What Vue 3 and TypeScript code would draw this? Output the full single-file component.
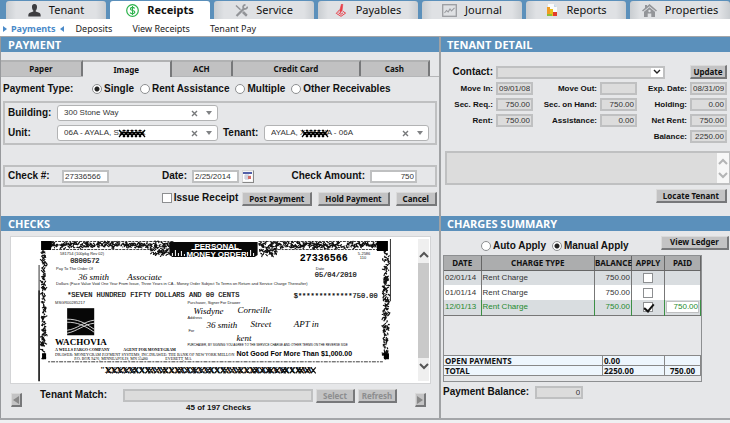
<script setup lang="ts">
import { computed, ref } from 'vue'

interface Charge {
  date: string
  type: string
  balance: string
  apply: boolean
  paid: string
}

const mainTabs = ['Tenant', 'Receipts', 'Service', 'Payables', 'Journal', 'Reports', 'Properties']
const activeTab = ref('Receipts')
const methods = ['Paper', 'Image', 'ACH', 'Credit Card', 'Cash']
const activeMethod = ref('Image')
const paymentTypes = ['Single', 'Rent Assistance', 'Multiple', 'Other Receivables']
const paymentType = ref('Single')
const applyModes = ['Auto Apply', 'Manual Apply']
const applyMode = ref('Manual Apply')

const building = ref('300 Stone Way')
const unit = ref('06A - AYALA, SXXXXX')
const tenant = ref('AYALA, XXXXXA - 06A')
const checkNumber = ref('27336566')
const checkDate = ref('2/25/2014')
const checkAmount = ref('750')
const issueReceipt = ref(false)

const details = [
  { id: 'move-in', label: 'Move In:', value: '09/01/08', text: true },
  { id: 'move-out', label: 'Move Out:', value: '', text: true },
  { id: 'exp', label: 'Exp. Date:', value: '08/31/09', text: true },
  { id: 'sec-req', label: 'Sec. Req.:', value: '750.00' },
  { id: 'sec-hand', label: 'Sec. on Hand:', value: '750.00' },
  { id: 'holding', label: 'Holding:', value: '0.00' },
  { id: 'rent', label: 'Rent:', value: '750.00' },
  { id: 'assistance', label: 'Assistance:', value: '0.00' },
  { id: 'net-rent', label: 'Net Rent:', value: '750.00' },
  { id: 'balance', label: 'Balance:', value: '2250.00', last: true },
]

const charges = ref<Charge[]>([
  { date: '02/01/14', type: 'Rent Charge', balance: '750.00', apply: false, paid: '' },
  { date: '01/01/14', type: 'Rent Charge', balance: '750.00', apply: false, paid: '' },
  { date: '12/01/13', type: 'Rent Charge', balance: '750.00', apply: true, paid: '750.00' },
])

// Repeatable engraved scrollwork for the money order's border.
function scrollwork(x: number, y: number, w: number, h: number, count: number, start: number) {
  let seed = start
  const next = (n: number) => {
    seed = (seed * 1103515245 + 12345) % 2147483648
    return Math.floor((seed / 2147483648) * n)
  }
  let d = ''
  for (let i = 0; i < count; i++) {
    d += `M${x + next(w)} ${y + next(h)}q${next(5) - 2} ${next(5) - 2} ${next(5) - 2} ${next(5) - 2}`
  }
  return d
}
const ornament = computed(() =>
  [
    scrollwork(51, 243, 122, 5, 260, 7),
    scrollwork(150, 249, 19, 7, 50, 19),
    scrollwork(259, 243, 118, 5, 250, 31),
    scrollwork(259, 249, 18, 7, 45, 43),
    scrollwork(42, 251, 4, 109, 150, 57),
    scrollwork(383, 251, 5, 109, 180, 71),
  ].join(''),
)
// Crossing pen strokes that blot out the routing line.
const blots = computed(() => {
  let d = ''
  for (let x = 106; x < 312; x += x % 5 === 0 ? 3 : 6) d += `M${x} 367l5 6M${x + 5} 367l-5 6`
  return d
})
</script>

<template>
  <div class="page">
    <nav class="main-tabs" aria-label="Main">
      <button v-for="t in mainTabs" :key="t" type="button" class="main-tab" :class="{ active: t === activeTab }" @click="activeTab = t">
        <svg v-if="t === 'Tenant'" class="tab-icon" viewBox="0 0 13 13"><path d="M6.500 0C4.500 0 3.800 1.500 4 3.500c.1 1.500.8 2.700 1.300 3.100v.9L1.800 8.700C.6 9.200.3 10 .3 12.500h12.400c0-2.500-.3-3.300-1.500-3.800L7.700 7.500v-.9c.5-.4 1.200-1.600 1.300-3.100.2-2-.5-3.500-2.500-3.500z" fill="#3d3d40" /></svg>
        <svg v-else-if="t === 'Receipts'" class="tab-icon" viewBox="0 0 13 13" fill="none" stroke="#2bb24a"><circle cx="6.500" cy="6.500" r="5.800" stroke-width="1.200" /><path d="M8.600 4.500C8.200 3.700 7.500 3.400 6.500 3.400c-1.300 0-2.100.6-2.100 1.500 0 2.200 4.400 1 4.400 3.200 0 1-1 1.600-2.300 1.600-1.200 0-2-.5-2.400-1.300M6.500 2v9" stroke-width="1.100" /></svg>
        <svg v-else-if="t === 'Service'" class="tab-icon" viewBox="0 0 13 13" fill="none" stroke="#929498"><path d="M1 1.500l4.500 4.300M8 8.200l3.700 3.700" stroke-width="1.500" /><path d="M8 8l3.700 3.700" stroke-width="2.600" /><path d="M1.500 12l7.700-7.600" stroke-width="2.200" /><path d="M12.200 2.600c.3 2.200-2.200 3-3.500 1.700S8.300.9 10.500.8" stroke-width="1.700" /></svg>
        <svg v-else-if="t === 'Payables'" class="tab-icon" viewBox="0 0 13 13" fill="none" stroke="#e83e48"><path d="M6.500 0l1.300.3-.7 6L5.300 9l-.4-3z" fill="#e83e48" stroke-width=".6" /><path d="M4.700 5.700L1.300 9.400 6 12.300l4.600-3.200-3-2M3.500 8.800l2.500 1.500 2-1.500" stroke-width="1" /></svg>
        <svg v-else-if="t === 'Journal'" class="tab-icon wide" viewBox="0 0 15 13" fill="none" stroke="#9b9da1"><rect x=".7" y=".7" width="13.600" height="11.600" stroke-width="1.300" /><path d="M2.500 9l2-2.500 1.700 1.400L8 5l1.500 2L12.500 3.800" stroke-width="1.100" /></svg>
        <svg v-else-if="t === 'Reports'" class="tab-icon" viewBox="0 0 13 13"><path d="M3 0h6l3 3v9H3z" fill="#fafcfd" /><path d="M9 0l3 3H9z" fill="#c5d9e8" /><path d="M2 3h3v9H2z" fill="#f09b20" /><path d="M5 5h3v7H5z" fill="#e7c21d" /><path d="M2 10h5v2H2z" fill="#8cbd36" /><path d="M8 8h4v4H8z" fill="#e33b2b" /></svg>
        <svg v-else class="tab-icon wide" viewBox="0 0 15 13" fill="#939599"><path d="M7.500 0L15 6.500l-1 1L7.500 2.200 1 7.500l-1-1L3 3.900V1h2v1.200z" /><path d="M7.500 3.200L13 7.700V13H9.300V9.500H5.700V13H2V7.700z" /><circle cx="7.500" cy="7" r="1.200" fill="#dfe1e4" /></svg>
        <span>{{ t }}</span>
      </button>
    </nav>

    <nav class="sub-nav" aria-label="Receipts">
      <a href="#" class="current">Payments</a>
      <a href="#">Deposits</a>
      <a href="#">View Receipts</a>
      <a href="#">Tenant Pay</a>
    </nav>

    <main class="board">
      <section class="panel payment">
        <h2>PAYMENT</h2>
        <div class="methods">
          <button v-for="m in methods" :key="m" type="button" class="method" :class="[m.toLowerCase().replace(' ', '-'), { active: m === activeMethod }]" @click="activeMethod = m">{{ m }}</button>
        </div>
        <div class="types" role="radiogroup" aria-labelledby="type-label">
          <span id="type-label" class="types-label">Payment Type:</span>
          <label v-for="p in paymentTypes" :key="p" class="choice"><input v-model="paymentType" type="radio" name="type" :value="p" />{{ p }}</label>
        </div>

        <div class="box lease">
          <label for="building">Building:</label>
          <div class="combo">
            <select id="building" v-model="building"><option>300 Stone Way</option></select>
            <button type="button" class="clear" aria-label="Clear building"><svg viewBox="0 0 7 7"><path d="M1 1l5 5M6 1L1 6" /></svg></button>
            <svg class="caret" viewBox="0 0 6 4"><path d="M0 0h6L3 4z" /></svg>
          </div>
          <label for="unit" class="row-two">Unit:</label>
          <div class="combo row-two">
            <select id="unit" v-model="unit"><option>06A - AYALA, SXXXXX</option></select>
            <svg class="redaction unit-mark" viewBox="0 0 28 9"><path d="M1 1l6 7M7 1L1 8M5 1l6 7M11 1L5 8M9 1l6 7M15 1L9 8M13 1l6 7M19 1l-6 7M17 1l6 7M23 1l-6 7M21 1l6 7M27 1l-6 7M2 5h24" /></svg>
            <button type="button" class="clear" aria-label="Clear unit"><svg viewBox="0 0 7 7"><path d="M1 1l5 5M6 1L1 6" /></svg></button>
            <svg class="caret" viewBox="0 0 6 4"><path d="M0 0h6L3 4z" /></svg>
          </div>
          <label for="tenant" class="row-two tenant-label">Tenant:</label>
          <div class="combo row-two">
            <select id="tenant" v-model="tenant"><option>AYALA, XXXXXA - 06A</option></select>
            <svg class="redaction tenant-mark" viewBox="0 0 28 9"><path d="M1 1l6 7M7 1L1 8M5 1l6 7M11 1L5 8M9 1l6 7M15 1L9 8M13 1l6 7M19 1l-6 7M17 1l6 7M23 1l-6 7M21 1l6 7M27 1l-6 7M2 5h24" /></svg>
            <button type="button" class="clear" aria-label="Clear tenant"><svg viewBox="0 0 7 7"><path d="M1 1l5 5M6 1L1 6" /></svg></button>
            <svg class="caret" viewBox="0 0 6 4"><path d="M0 0h6L3 4z" /></svg>
          </div>
        </div>

        <div class="box check-row">
          <label for="check-no">Check #:</label>
          <input id="check-no" v-model="checkNumber" class="field" type="text" />
          <label for="check-date" class="end">Date:</label>
          <input id="check-date" v-model="checkDate" class="field" type="text" />
          <button type="button" class="calendar" aria-label="Pick date">
            <svg viewBox="0 0 9 9"><path d="M0 0h9v9H0z" fill="#fff" /><path d="M0 0h9v2H0z" fill="#5360a8" /><path d="M1 4h7M1 6h7M3 2v6M5 2v6" stroke="#bfc1d2" /><path d="M5 4h3v3H5z" fill="#d46c68" /></svg>
          </button>
          <label for="check-amount" class="end">Check Amount:</label>
          <input id="check-amount" v-model="checkAmount" class="field number" type="text" />
        </div>

        <div class="actions">
          <label class="choice issue"><input v-model="issueReceipt" type="checkbox" />Issue Receipt</label>
          <button type="button" class="btn">Post Payment</button>
          <button type="button" class="btn">Hold Payment</button>
          <button type="button" class="btn">Cancel</button>
        </div>
      </section>

      <section class="panel detail">
        <h2>TENANT DETAIL</h2>
        <div class="detail-grid">
          <label for="contact" class="contact-label">Contact:</label>
          <div class="contact">
            <select id="contact"><option></option></select>
            <span class="contact-arrow"><svg viewBox="0 0 8 6"><path d="M1 1l3 3 3-3" /></svg></span>
          </div>
          <button type="button" class="btn update">Update</button>
          <template v-for="d in details" :key="d.id">
            <label :for="d.id" :class="{ last: d.last }">{{ d.label }}</label>
            <input :id="d.id" class="field muted" :class="{ number: !d.text }" type="text" readonly :value="d.value" />
          </template>
        </div>
        <div class="notes">
          <textarea aria-label="Notes" readonly></textarea>
          <div class="notes-bar">
            <svg viewBox="0 0 10 7"><path d="M1 6l4-4 4 4" /></svg>
            <svg viewBox="0 0 10 7"><path d="M1 1l4 4 4-4" /></svg>
          </div>
        </div>
        <div class="locate"><button type="button" class="btn">Locate Tenant</button></div>
      </section>

      <section class="panel checks">
        <h2>CHECKS</h2>
        <div class="viewer">
          <svg class="check" viewBox="11 237 405 146" role="img" aria-label="Personal money order">
            <g fill="none" stroke="#111">
              <path :d="ornament" stroke-width="1.100" />
              <path d="M39 265v25M389.500 239v62" stroke="#333" />
              <path d="M39 290v91" stroke-width="1.600" />
              <path d="M51 241.500h122M258 241.500h120M52 249.500h98M277 249.500h100" stroke-width=".8" stroke-dasharray="3 1 2 1" />
              <path d="M48 361.500h334" stroke-width=".8" stroke-dasharray="2 1 4 1" />
            </g>
            <path d="M41 241h10v9H41zM376 241h11v10h-11zM42 353h4v6h-4zM383 353h5v6h-5z" fill="#000" />
            <path d="M169 242h88v13l-3 2h-82l-3-2z" fill="#080808" />
            <path d="M172 256v-3M175 256v-6M178 256v-3M181 256v-5M184 256v-2M247 256v-4M250 256v-6M253 256v-3M191 249.500h50M170 257.500h86" stroke="#fff" />
            <g class="banner">
              <text x="194" y="249">PERSONAL</text>
              <text x="186" y="257">MONEY ORDER</text>
            </g>
            <g class="tiny">
              <text x="60" y="255">581754 (100pkg Rev 02)</text>
              <text x="56" y="270">Pay To The Order Of</text>
              <text x="56" y="285">Dollars (Face Value Void One Year From Issue, Three Years in CA - Money Order Subject To Terms on Return and Service Charge Thereafter)</text>
              <text x="55" y="304">MSGR00285217</text>
              <text x="187" y="304">Purchaser, Signer For Drawer</text>
              <text x="187" y="319">Address</text>
              <text x="188" y="332">For</text>
              <text x="315" y="270">Date</text>
              <text x="357" y="255">5-2586</text>
              <text x="359" y="259">110</text>
            </g>
            <text class="terms" x="187" y="346">PURCHASER, BY SIGNING YOU AGREE TO THE SERVICE CHARGE AND OTHER TERMS ON THE REVERSE SIDE</text>
            <g class="drawer">
              <text x="55" y="356">DRAWER: MONEYGRAM PAYMENT SYSTEMS, INC.</text>
              <text x="74" y="360">P.O. BOX 9476, MINNEAPOLIS, MN 55480</text>
              <text x="149" y="356">DRAWEE: THE BANK OF NEW YORK MELLON</text>
              <text x="165" y="360">EVERETT, MA</text>
            </g>
            <g class="typed">
              <text x="70" y="263">0800572</text>
              <text x="67" y="297">*SEVEN HUNDRED FIFTY DOLLARS AND 00 CENTS</text>
              <text x="293" y="298">$*************750.00</text>
              <text x="314" y="277">05/04/2010</text>
            </g>
            <text class="serial" x="299" y="261">27336566</text>
            <g class="pen">
              <text x="78" y="280">36 smith</text>
              <text x="127" y="280">Associate</text>
              <text x="193" y="314">Wisdyne</text>
              <text x="237" y="313">Corneille</text>
              <text x="206" y="328">36 smith</text>
              <text x="250" y="327">Street</text>
              <text x="293" y="327">APT in</text>
              <text x="236" y="341">kent</text>
            </g>
            <path d="M67 308h27v27H67z" fill="#070707" />
            <path d="M67 319c10 0 17 3 27 10M67 322c10 0 17 3 27 10M67 330c10-1 17-9 27-10M67 333c10-2 17-9 27-10" fill="none" stroke="#fff" stroke-width=".8" />
            <text class="bank" x="55" y="345">WACHOVIA</text>
            <text class="agent" x="55" y="351">A WELLS FARGO COMPANY</text>
            <text class="agent" x="123" y="351">AGENT FOR MONEYGRAM</text>
            <text class="limit" x="236" y="356">Not Good For More Than $1,000.00</text>
            <text class="micr" x="100" y="373">"XXXXXXXXXXXXXXXXXXXXXXXXXXXXXXXXXXXX</text>
            <path :d="blots" stroke="#111" stroke-width="1.200" />
          </svg>
          <div class="scrollbar">
            <svg viewBox="0 0 10 8"><path d="M1 6l4-4 4 4" /></svg>
            <span class="thumb"></span>
            <svg viewBox="0 0 10 8"><path d="M1 2l4 4 4-4" /></svg>
          </div>
        </div>
        <div class="pager">
          <button type="button" class="btn step" aria-label="Previous check"><svg viewBox="0 0 6 8"><path d="M6 0v8L0 4z" /></svg></button>
          <div class="match">
            <label for="match">Tenant Match:</label>
            <input id="match" class="field muted" type="text" disabled />
            <button type="button" class="btn" disabled>Select</button>
            <button type="button" class="btn" disabled>Refresh</button>
            <p>45 of 197 Checks</p>
          </div>
          <button type="button" class="btn step" aria-label="Next check"><svg viewBox="0 0 6 8"><path d="M0 0v8l6-4z" /></svg></button>
        </div>
      </section>

      <section class="panel charges">
        <h2>CHARGES SUMMARY</h2>
        <div class="modes">
          <label v-for="a in applyModes" :key="a" class="choice"><input v-model="applyMode" type="radio" name="mode" :value="a" />{{ a }}</label>
          <button type="button" class="btn ledger">View Ledger</button>
        </div>
        <div class="ledger-box">
          <table class="lines">
            <colgroup><col class="c-date" /><col /><col class="c-balance" /><col class="c-apply" /><col class="c-paid" /></colgroup>
            <thead>
              <tr><th>DATE</th><th>CHARGE TYPE</th><th>BALANCE</th><th>APPLY</th><th>PAID</th></tr>
            </thead>
            <tbody>
              <tr v-for="c in charges" :key="c.date" :class="{ applied: c.apply }">
                <td>{{ c.date }}</td>
                <td>{{ c.type }}</td>
                <td class="num">{{ c.balance }}</td>
                <td class="mid"><input v-model="c.apply" type="checkbox" :aria-label="'Apply ' + c.date" /></td>
                <td><input v-if="c.apply" v-model="c.paid" class="paid" type="text" :aria-label="'Paid ' + c.date" /></td>
              </tr>
            </tbody>
          </table>
          <table class="totals">
            <colgroup><col /><col class="t-sum" /><col class="c-paid" /></colgroup>
            <tbody>
              <tr><th>OPEN PAYMENTS</th><td>0.00</td><td></td></tr>
              <tr><th>TOTAL</th><td>2250.00</td><td class="mid">750.00</td></tr>
            </tbody>
          </table>
        </div>
        <div class="remaining">
          <label for="remaining">Payment Balance:</label>
          <input id="remaining" class="field muted number" type="text" readonly value="0" />
        </div>
      </section>
    </main>
  </div>
</template>

<style>
body {
  margin: 0;
  background: #eff0f2;
}
</style>

<style scoped>
.page,
.page * {
  box-sizing: border-box;
}
.page {
  font: bold 10px/12px 'Liberation Sans', Arial, sans-serif;
  color: #111;
}
button,
input,
select,
textarea {
  margin: 0;
  padding: 0;
  border-radius: 0;
  font: inherit;
  color: inherit;
  min-width: 0;
}
svg {
  display: block;
}

.main-tabs {
  display: flex;
  gap: 4px;
  padding: 1px 0 0 6px;
  background: #5b90bb;
}
.main-tab {
  flex: 1;
  display: flex;
  align-items: center;
  justify-content: center;
  gap: 8px;
  height: 18px;
  border: 0;
  border-radius: 3px 3px 0 0;
  background: linear-gradient(90deg, #c9cdd1, #dfe1e4 10%, #dfe1e4 90%, #c9cdd1);
  font: 11px/16px 'Noto Sans', sans-serif;
}
.main-tab.active {
  background: #fff;
  font: bold 11px/16px 'Noto Sans', sans-serif;
}
.tab-icon {
  width: 13px;
  height: 13px;
}
.tab-icon.wide {
  width: 15px;
}

.sub-nav {
  display: flex;
  align-items: center;
  gap: 20px;
  height: 17px;
  padding: 2px 3px 0;
  background: #fff;
  font: 9px/12px 'Noto Sans', sans-serif;
}
.sub-nav a {
  color: #222;
  text-decoration: none;
}
.sub-nav .current {
  display: flex;
  align-items: center;
  gap: 4px;
  margin-right: -8px;
  color: #4a8ac9;
  font-weight: bold;
}
.sub-nav .current::before,
.sub-nav .current::after {
  content: '';
  border: 3px solid transparent;
  border-left: 4px solid #4a8ac9;
  border-right: 0;
}
.sub-nav .current::after {
  border-left: 0;
  border-right: 4px solid #4a8ac9;
}

.board {
  display: grid;
  grid-template-columns: minmax(0, 441fr) minmax(0, 289fr);
  grid-template-rows: 179px auto;
  border-top: 1px solid #a4a6a9;
  border-bottom: 2px solid #a4a6a9;
  background: #e6e7e9;
}
.payment,
.checks {
  border-left: 1px solid #97999c;
  border-right: 2px solid #a0a2a4;
}
h2 {
  margin: 0;
  padding-left: 7px;
  background: #5b90bb;
  color: #fff;
  font: bold 11px/15px 'Open Sans', sans-serif;
}
.detail h2,
.charges h2 {
  padding-left: 6px;
}

.methods {
  display: flex;
  margin-top: 8px;
  padding-right: 9px;
  border-bottom: 1px solid #b5b6b8;
}
.method {
  height: 16px;
  flex: 82 1 0;
  border: 0;
  border-top: 2px solid #b1b2b3;
  border-right: 2px solid #77787a;
  background: #c1c1c2;
  font: bold 8px/12px 'Noto Sans', sans-serif;
}
.method.image {
  flex-grow: 89;
}
.method.ach {
  flex-grow: 61;
}
.method.credit-card {
  flex-grow: 129;
}
.method.cash {
  flex-grow: 69;
}
.method.active {
  height: 17px;
  margin-bottom: -1px;
  background: #e6e7e9;
}

.types {
  display: flex;
  align-items: center;
  gap: 6px;
  height: 24px;
  padding-left: 2px;
}
.types-label {
  width: 83px;
}
.choice {
  display: flex;
  align-items: center;
  gap: 2px;
}
input[type='radio'] {
  appearance: none;
  width: 10px;
  height: 10px;
  border: 1px solid #8d8f91;
  border-radius: 50%;
  background: #fff;
}
input[type='radio']:checked {
  background: radial-gradient(circle, #222 0 2px, #fff 3px);
}
input[type='checkbox'] {
  appearance: none;
  display: inline-block;
  width: 10px;
  height: 10px;
  border: 1px solid #8d8f91;
  background: #fff;
  vertical-align: middle;
}
.lines input[type='checkbox'] {
  display: block;
  margin: 0 auto;
}
input[type='checkbox']:checked {
  position: relative;
}
input[type='checkbox']:checked::after {
  content: '';
  position: absolute;
  left: 2px;
  top: -1px;
  width: 4px;
  height: 8px;
  border: solid #111;
  border-width: 0 2px 2px 0;
  transform: rotate(40deg);
}

.box {
  display: grid;
  align-items: center;
  margin: 0 2px;
  border: 2px solid #bfc0c1;
}
.lease {
  grid-template-columns: 49px minmax(0, 161fr) 46px minmax(0, 165fr);
  row-gap: 4px;
  padding: 2px 6px 2px 3px;
}
.tenant-label {
  padding-left: 5px;
}
.row-two {
  grid-row: 2;
}
.combo {
  position: relative;
  display: flex;
  align-items: center;
  height: 16px;
  padding: 0 5px 0 6px;
  border: 1px solid #b2b3b4;
  border-radius: 3px;
  background: #fff;
}
.combo select {
  flex: 1;
  appearance: none;
  border: 0;
  background: none;
  color: #333;
  font: 8px/12px 'Liberation Sans', Arial, sans-serif;
}
.clear {
  border: 0;
  background: none;
}
.clear svg {
  width: 7px;
  height: 7px;
  fill: none;
  stroke: #77797b;
  stroke-width: 1.4;
}
.caret {
  width: 6px;
  height: 4px;
  margin-left: 8px;
  fill: #808284;
}
.redaction {
  position: absolute;
  top: 3px;
  width: 28px;
  height: 9px;
  fill: none;
  stroke: #000;
  stroke-width: 1.2;
}
.unit-mark {
  left: 60px;
}
.tenant-mark {
  left: 36px;
}

.check-row {
  grid-template-columns: 54px minmax(0, 47fr) minmax(0, 83fr) minmax(0, 47fr) 15px minmax(0, 116fr) minmax(0, 47fr);
  margin-top: 20px;
  height: 22px;
  padding: 0 18px 0 3px;
}
.end {
  padding-right: 5px;
  text-align: right;
}
.field {
  width: 100%;
  height: 13px;
  padding: 0 1px;
  border: 2px solid #bfc0c1;
  background: #fff;
  color: #333;
  font: 8px/9px 'Liberation Sans', Arial, sans-serif;
}
.field.muted {
  background: #dcdcdc;
}
.number {
  text-align: right;
}
.calendar {
  width: 12px;
  height: 13px;
  margin-left: 3px;
  border: 1px solid;
  border-color: #d8d8d8 #888 #888 #d8d8d8;
  background: #f4f4f4;
}
.calendar svg {
  width: 9px;
  height: 9px;
}

.actions {
  display: flex;
  justify-content: flex-end;
  gap: 6px;
  margin-top: 5px;
  padding-right: 2px;
}
.issue {
  margin-right: -2px;
  align-self: flex-start;
}
.btn {
  height: 14px;
  padding: 0 6px;
  border: 1px solid;
  border-width: 1px 2px 2px 1px;
  border-color: #dadada #77787a #77787a #dadada;
  background: #c3c3c4;
  font: bold 8px/10px 'Noto Sans', sans-serif;
  white-space: nowrap;
}
.btn:disabled {
  color: #8c8d8f;
}

.detail-grid {
  display: grid;
  grid-template-columns: 52px minmax(0, 37fr) minmax(0, 61fr) minmax(0, 37fr) minmax(0, 47fr) minmax(0, 37fr);
  gap: 3px;
  align-items: center;
  padding: 13px 3px 0 0;
  text-align: right;
  font: bold 8px/12px 'Liberation Sans', Arial, sans-serif;
}
.detail-grid label {
  white-space: nowrap;
}
.detail-grid .contact-label {
  font-size: 10px;
}
.contact {
  display: flex;
  grid-column: 2 / 6;
  height: 13px;
  margin-right: 22px;
  border: 2px solid #bfc0c1;
  background: #dcdcdc;
}
.contact select {
  flex: 1;
  appearance: none;
  border: 0;
  background: none;
}
.contact-arrow {
  display: flex;
  align-items: center;
  padding: 0 2px;
  background: #fff;
}
.contact-arrow svg {
  width: 8px;
  height: 6px;
  fill: none;
  stroke: #222;
  stroke-width: 1.4;
}
.update {
  padding: 0;
}
.last {
  grid-column: 5;
}

.notes {
  display: flex;
  height: 34px;
  margin: 8px 0 0 4px;
  border: 2px solid #bfc0c1;
  border-right-width: 1px;
  background: #dcdcdc;
}
.notes textarea {
  flex: 1;
  border: 0;
  background: none;
  resize: none;
}
.notes-bar {
  display: flex;
  flex-direction: column;
  justify-content: space-between;
  padding: 5px 1px 4px;
  background: #f7f7f7;
}
.notes-bar svg {
  width: 10px;
  height: 7px;
  fill: none;
  stroke: #b3b4b5;
  stroke-width: 2;
}
.locate {
  display: flex;
  justify-content: flex-end;
  padding: 4px 3px 0 0;
}

.viewer {
  display: flex;
  margin: 5px 8px 0 9px;
  border: 1px solid #d3d4d6;
  background: #fff;
}
.check {
  flex: 1;
  min-width: 0;
}
.banner text {
  fill: #fff;
  font: bold 8px 'Liberation Sans', Arial, sans-serif;
}
.tiny text {
  fill: #222;
  font: 4px 'Liberation Sans', Arial, sans-serif;
}
.terms {
  font: 3px 'Liberation Sans', Arial, sans-serif;
}
.drawer text {
  font: 4px 'Liberation Serif', serif;
}
.typed text {
  font: 7px 'Liberation Mono', monospace;
  stroke: #111;
  stroke-width: 0.2;
}
.serial {
  font: bold 10px 'Liberation Mono', monospace;
}
.pen text {
  font: italic 9px 'Liberation Serif', serif;
}
.bank {
  font: bold 9px 'Liberation Serif', serif;
}
.agent {
  font: bold 4px 'Liberation Serif', serif;
}
.limit {
  font: bold 7px 'Liberation Sans', Arial, sans-serif;
}
.micr {
  font: bold 8px 'Liberation Serif', serif;
}
.scrollbar {
  display: flex;
  flex-direction: column;
  align-items: center;
  gap: 4px;
  margin: 2px 1px;
  padding-top: 12px;
  padding-bottom: 11px;
  background: #efefef;
}
.scrollbar svg {
  width: 10px;
  height: 8px;
  fill: none;
  stroke: #555;
  stroke-width: 2;
}
.thumb {
  flex: 1;
  width: 11px;
  background: #c9c9c9;
}

.pager {
  display: flex;
  justify-content: space-between;
  padding: 5px 13px 5px 10px;
}
.step {
  width: 11px;
  margin-top: 4px;
  padding: 1px;
}
.step svg {
  width: 6px;
  height: 8px;
  fill: #888;
}
.match {
  flex: 1;
  display: grid;
  grid-template-columns: 80px minmax(0, 189fr) 39px 39px;
  column-gap: 3px;
  padding: 0 18px;
}
.match .btn {
  padding: 0;
}
.match p {
  grid-column: 1 / 5;
  margin: 0;
  text-align: center;
  font: bold 8px/10px 'Liberation Sans', Arial, sans-serif;
}

.modes {
  display: flex;
  align-items: center;
  gap: 6px;
  height: 23px;
  padding: 0 1px 0 40px;
}
.modes .choice {
  padding-top: 7px;
}
.ledger {
  width: 68px;
  margin-left: auto;
}
.ledger-box {
  margin: 1px 28px 0 2px;
  padding-bottom: 5px;
  border: 1px solid #8d8f91;
}
table {
  width: 100%;
  table-layout: fixed;
  border-collapse: collapse;
}
th,
td {
  padding: 0 1px;
}
.c-date {
  width: 37px;
}
.c-balance {
  width: 37px;
}
.c-apply {
  width: 33px;
}
.c-paid {
  width: 36px;
}
.t-sum {
  width: 62px;
}
.lines {
  border-bottom: 1px solid #777;
  font: 8px/12px 'Liberation Sans', Arial, sans-serif;
}
.lines thead th {
  height: 14px;
  padding: 0;
  border-right: 1px solid #666;
  border-bottom: 1px solid #666;
  background: #acadae;
  font: bold 8px/12px 'Noto Sans', sans-serif;
}
.lines td {
  height: 15px;
  border-right: 1px solid #777;
  color: #333;
}
.lines tbody tr {
  background: #d9dde0;
}
.lines tbody tr:nth-child(even) {
  background: #fff;
}
.lines tbody .applied td {
  border-color: #3c8f45;
  color: #258a2e;
}
.lines .num {
  text-align: right;
}
.lines .mid,
.totals .mid {
  text-align: center;
}
.paid {
  display: block;
  width: 100%;
  height: 12px;
  border: 1px solid #bfc0c1;
  background: #fff;
  text-align: right;
}
.totals {
  margin-top: 39px;
  background: #eef6fd;
  font: bold 8px/9px 'Noto Sans', sans-serif;
}
.totals th,
.totals td {
  height: 10px;
  border: 1px solid #888;
  border-left: 0;
  text-align: left;
}
.remaining {
  display: flex;
  align-items: center;
  gap: 6px;
  padding: 4px 2px;
}
.remaining .field {
  width: 48px;
}
</style>
